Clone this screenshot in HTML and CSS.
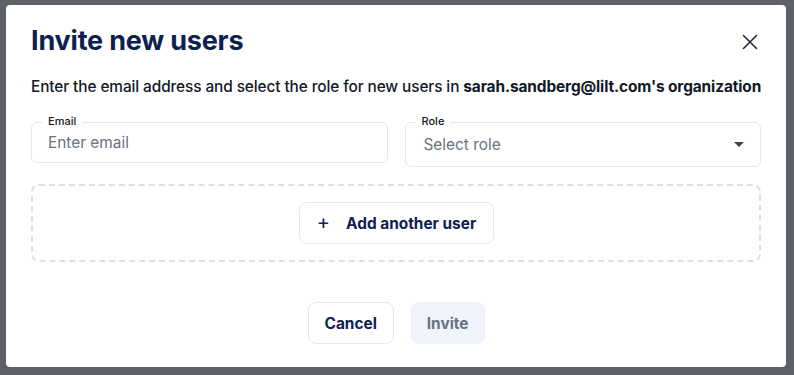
FILE: index.html
```html
<!DOCTYPE html>
<html>
<head>
<meta charset="utf-8">
<link rel="stylesheet" href="styles.css">
</head>
<body>
<div class="dialog">
  <div class="header">
    <h1 class="title">Invite new users</h1>
    <button class="close" aria-label="Close">
      <svg width="16" height="16" viewBox="0 0 16 16"><path d="M1.5 1.5 L14.5 14.5 M14.5 1.5 L1.5 14.5" stroke="#1f2937" stroke-width="1.6" stroke-linecap="round"/></svg>
    </button>
  </div>
  <p class="subtitle">Enter the email address and select the role for new users in <b>sarah.sandberg@lilt.com's organization</b></p>
  <div class="fields">
    <div class="field email">
      <span class="label">Email</span>
      <span class="placeholder">Enter email</span>
    </div>
    <div class="field role">
      <span class="label">Role</span>
      <span class="placeholder">Select role</span>
      <svg class="caret" width="10" height="5" viewBox="0 0 10 5"><path d="M0 0 L10 0 L5 5 Z" fill="#374151"/></svg>
    </div>
  </div>
  <div class="addbox">
    <button class="btn add"><span class="plus">+</span>Add another user</button>
  </div>
  <div class="footer">
    <button class="btn cancel">Cancel</button>
    <button class="btn invite">Invite</button>
  </div>
</div>
</body>
</html>
```
FILE: styles.css
```css
html, body { margin: 0; }
body {
  background: #5f6168;
  width: 794px;
  height: 375px;
  overflow: hidden;
  font-family: Inter, "Noto Sans", sans-serif;
  padding: 5px 0 0 6px;
  box-sizing: border-box;
}
.dialog {
  width: 780px;
  height: 362px;
  background: #fff;
  border-radius: 4px;
  box-sizing: border-box;
  padding: 19px 25px 0 25px;
}
.header {
  display: flex;
  justify-content: space-between;
  align-items: center;
}
.title {
  margin: 0;
  font-size: 27px;
  line-height: 34px;
  font-weight: 700;
  color: #0c2150;
  letter-spacing: -0.2px;
}
.close {
  border: 0;
  background: none;
  padding: 0;
  width: 16px;
  height: 16px;
  margin-right: 3px;
  margin-top: 2px;
  display: flex;
}
.subtitle {
  margin: 19px 0 0 0;
  font-size: 15.4px;
  line-height: 20px;
  color: #111827;
  font-weight: 500;
  white-space: nowrap;
  letter-spacing: -0.1px;
}
.subtitle b { font-weight: 700; }
.fields {
  display: grid;
  grid-template-columns: 1fr 1fr;
  column-gap: 17px;
  margin-top: 25px;
  align-items: start;
}
.field {
  position: relative;
  min-width: 0;
  border: 1px solid #e5e7eb;
  border-radius: 6px;
  box-sizing: border-box;
  display: flex;
  align-items: center;
  padding-left: 16px;
}
.email { height: 41px; }
.role { height: 45px; padding-left: 18px; padding-right: 16px; justify-content: space-between; }
.label {
  position: absolute;
  top: -9px;
  left: 10px;
  background: #fff;
  padding: 0 6px;
  font-size: 11px;
  line-height: 14px;
  font-weight: 500;
  color: #111827;
}
.placeholder {
  font-size: 15.4px;
  color: #6b7280;
}
.addbox {
  margin-top: 17px;
  height: 78px;
  border: 2px dashed #dcdfe4;
  border-radius: 8px;
  box-sizing: border-box;
  display: flex;
  align-items: center;
  justify-content: center;
}
.btn {
  font-family: Inter, "Noto Sans", sans-serif;
  font-size: 15.4px;
  font-weight: 700;
  color: #0c2150;
  background: #fff;
  border: 1px solid #e5e7eb;
  border-radius: 8px;
  height: 42px;
  box-sizing: border-box;
}
.add {
  padding: 0 17px 0 17px;
  display: flex;
  align-items: center;
  margin-left: 1px;
}
.plus {
  font-size: 20px;
  font-weight: 400;
  margin-right: 16px;
  line-height: 1;
  margin-top: -2px;
}
.footer {
  display: flex;
  justify-content: center;
  gap: 17px;
  margin-top: 40px;
}
.cancel { padding: 0 16px; }
.invite {
  padding: 0 15px;
  background: #f0f3fb;
  border-color: #f0f3fb;
  color: #6b7280;
}
```
